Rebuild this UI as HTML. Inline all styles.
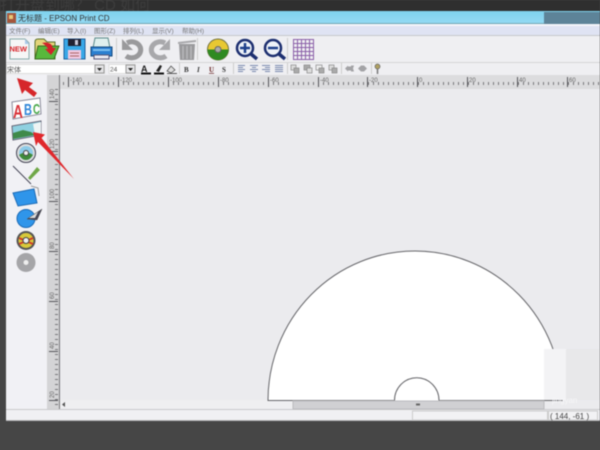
<!DOCTYPE html>
<html><head><meta charset="utf-8">
<style>
html,body{margin:0;padding:0;background:#464646;}
body{width:600px;height:450px;overflow:hidden;position:relative;font-family:"Liberation Sans","Noto Sans CJK SC",sans-serif;}
div{position:absolute;box-sizing:border-box;}
svg{position:absolute;left:0;top:0;}
#w{left:0;top:0;width:600px;height:450px;filter:blur(.45px);background:#464646;}
</style></head>
<body>
<div id="w">
<div style="left:0;top:0;width:600px;height:11px;background:#2f2f2f"></div>
<div style="left:0;top:0;width:340px;height:11px;color:#3d3d3d;font-size:15px;line-height:11px;white-space:nowrap;overflow:hidden;">打开盘到哪？ CD 如何</div>
<div style="left:6px;top:11px;width:594px;height:13px;background:linear-gradient(#7fd2ee,#93d9f3);border-bottom:1px solid #6fa6b5"></div>
<div style="left:544px;top:12px;width:56px;height:12px;background:#5d8398"></div>
<div style="left:6px;top:24px;width:594px;height:2px;background:#f4f5fa"></div>
<div style="left:6px;top:26px;width:594px;height:10px;background:#dfe3f3;border-bottom:1px solid #c6c7cc"></div>
<div style="left:6px;top:36px;width:594px;height:26px;background:#efeff2"></div>
<div style="left:6px;top:62px;width:594px;height:13px;background:#efeff2;border-top:1px solid #d6d6d6"></div>
<div style="left:6px;top:75px;width:41px;height:334px;background:#f1f1f5"></div>
<div style="left:47px;top:75px;width:553px;height:14px;background:#dcdcde"></div>
<div style="left:47px;top:75px;width:13px;height:334px;background:#d4d4d6;border-right:1px solid #77777a"></div>
<div style="left:60px;top:89px;width:540px;height:320px;background:#ebebee"></div>
<div style="left:60px;top:400px;width:484px;height:9px;background:#efeff1"></div>
<div style="left:6px;top:409px;width:594px;height:12px;background:#f0f0f3;border-top:1px solid #c9c9cc;border-bottom:1px solid #b5b5b8"></div>
<div style="left:60px;top:82px;width:540px;height:3px;background:repeating-linear-gradient(90deg,#77777a 0 1px,transparent 1px 5px);background-position:3px 0"></div>
<div style="left:55px;top:89px;width:3px;height:320px;background:repeating-linear-gradient(#77777a 0 1px,transparent 1px 5px)"></div>
<svg width="600" height="450" viewBox="0 0 600 450">
<!-- ruler majors -->
<g stroke="#55555a" stroke-width="1">
<path d="M68.500 77V87M118.500 77V87M168.500 77V87M218.500 77V87M268.500 77V87M318.500 77V87M367.500 77V87M417.500 77V87M467.500 77V87M517.500 77V87M567.500 77V87"/>
<path d="M49 101.500H58M49 151.500H58M49 201.500H58M49 251.500H58M49 301.500H58M49 351.500H58M49 400.500H58"/>
</g>
<g fill="#666" font-size="6" font-family="Liberation Sans">
<text x="70" y="82">-140</text><text x="120" y="82">-120</text><text x="170" y="82">-100</text><text x="220" y="82">-80</text><text x="270" y="82">-60</text><text x="320" y="82">-40</text><text x="369" y="82">-20</text><text x="419" y="82">0</text><text x="469" y="82">20</text><text x="519" y="82">40</text><text x="569" y="82">60</text>
<text transform="translate(54,99) rotate(-90)">140</text><text transform="translate(54,149) rotate(-90)">120</text><text transform="translate(54,199) rotate(-90)">100</text><text transform="translate(54,249) rotate(-90)">80</text><text transform="translate(54,299) rotate(-90)">60</text><text transform="translate(54,349) rotate(-90)">40</text><text transform="translate(54,398) rotate(-90)">20</text>
</g>
<!-- disc -->
<path d="M268 400.500A147 149.500 0 0 1 562 400.500Z" fill="#fff" stroke="#66666a" stroke-width="1"/>
<path d="M394.500 400.500A22 22.500 0 0 1 439 400.500" fill="#fff" stroke="#66666a" stroke-width="1"/>
<rect x="544" y="349" width="22" height="51" fill="#f3f3f5"/>
<rect x="566" y="349" width="34" height="51" fill="#e8e8ea"/>
<text x="552" y="403" font-size="8" fill="#f6f6f8">jingyan</text>
<rect x="293" y="401" width="251" height="8" fill="#d0d0d3" stroke="#bcbcbf" stroke-width="1"/>
<path d="M416 404.500h4" stroke="#666" stroke-width="2"/>
<path d="M62 404.500l3-2.500v5z" fill="#555"/>
<rect x="412.500" y="411" width="135" height="9" fill="#f2f2f4" stroke="#ccc"/>
<rect x="548.500" y="411" width="49" height="9" fill="#f2f2f4" stroke="#ccc"/>
<text x="550" y="419" font-size="8" fill="#444" font-family="Liberation Sans">( 144, -61 )</text>
<!-- title icon -->
<rect x="7" y="13" width="9" height="10" fill="#a5563c"/>
<rect x="9" y="15" width="4" height="4" fill="#e8c777"/>
<text x="18" y="21" font-size="8" fill="#333">无标题 - EPSON Print CD</text>
<!-- menu -->
<g font-size="6.500" fill="#777">
<text x="9" y="33">文件(F)</text><text x="38" y="33">编辑(E)</text><text x="67" y="33">导入(I)</text><text x="94" y="33">图形(Z)</text><text x="123" y="33">排列(L)</text><text x="152" y="33">显示(V)</text><text x="182" y="33">帮助(H)</text>
</g>
<!-- NEW -->
<path d="M10 39h15l4 4v16H10z" fill="#f6f6f6" stroke="#8aa" stroke-width="1"/>
<path d="M25 39v5h4z" fill="#a8c8ea"/>
<text x="9.500" y="51.500" font-size="7.500" font-weight="700" fill="#d8242a">NEW</text>
<!-- open -->
<path d="M35 59l0-17q0-3 3-3h6l3 3h8v17z" fill="#e4d47a" stroke="#59702b"/>
<path d="M35 59l3-13h21l-5 13z" fill="#58b83c" stroke="#3a6a20"/>
<path d="M42 43q9-2 11 5l3 0-5 7-6-6 3 0q-2-4-6-6z" fill="#d2222a"/>
<!-- save -->
<path d="M64 39h21v20H64z" fill="#38a8e8" stroke="#1d5f9d"/>
<rect x="68" y="39" width="13" height="7" fill="#223"/>
<rect x="75" y="40" width="3" height="5" fill="#ccd"/>
<rect x="68" y="50" width="13" height="9" fill="#f0c8e0"/>
<path d="M70 53h9M70 56h9" stroke="#a66"/>
<!-- print -->
<path d="M95 38h13l2 10H93z" fill="#dff0ee" stroke="#5a8a8a"/>
<path d="M91 47h21v9H91z" fill="#2a7fd0" stroke="#134a80"/>
<rect x="94" y="55" width="15" height="4" fill="#e8e8f0" stroke="#557"/>
<path d="M93 49h17v2H93z" fill="#7cc0f0"/>
<path d="M116.500 38v22" stroke="#ccc"/>
<!-- undo/redo -->
<path d="M127 43a9 8 0 1 1 -1 13" fill="none" stroke="#9a9a9c" stroke-width="5"/>
<path d="M122 39v11h11z" fill="#9a9a9c"/>
<path d="M165 43a9 8 0 1 0 1 13" fill="none" stroke="#a8a8ab" stroke-width="5"/>
<path d="M170 39v11h-11z" fill="#a8a8ab"/>
<!-- trash -->
<path d="M179 44h16l-1 16h-14z" fill="#9a9a9d"/>
<path d="M183 46v13M187 46v13M191 46v13" stroke="#c2c2c4"/>
<path d="M178 42l18-2v2l-18 2z" fill="#a8a8ab"/>
<path d="M197.500 38v22" stroke="#ccc"/>
<!-- CD green -->
<circle cx="218" cy="49.500" r="10.500" fill="#e8c832" stroke="#707040"/>
<path d="M207.500 49.500a10.500 10.500 0 0 0 21 0z" fill="#2f8a22"/>
<circle cx="218" cy="49.500" r="3" fill="#aaa" stroke="#666"/>
<!-- zoom -->
<g fill="#eef2f8" stroke="#1d2f70" stroke-width="2.500">
<circle cx="245" cy="48" r="8"/><circle cx="273" cy="48" r="8"/>
</g>
<path d="M251 54l6 5M279 54l6 5" stroke="#1d2f70" stroke-width="3.500"/>
<path d="M240 48h10M245 43v10M268 48h10" stroke="#1d3f8a" stroke-width="2.500"/>
<path d="M287.500 38v22" stroke="#ccc"/>
<!-- grid -->
<g stroke="#8a5fa8" stroke-width="1">
<path d="M293 39.500h21M293 43.500h21M293 47.500h21M293 51.500h21M293 55.500h21M293 59.500h21"/>
<path d="M293.500 39v21M297.500 39v21M301.500 39v21M305.500 39v21M309.500 39v21M313.500 39v21"/>
</g>
<!-- format row -->
<rect x="6.500" y="64.500" width="98" height="9" fill="#fff" stroke="#ddd"/>
<rect x="95" y="65" width="9" height="8" fill="#e4e4e6" stroke="#999"/>
<path d="M97 68h5l-2.500 3z" fill="#222"/>
<text x="7" y="72" font-size="7" fill="#555">宋体</text>
<rect x="109" y="64.500" width="26" height="9" fill="#fff" stroke="#ddd"/>
<rect x="126" y="65" width="9" height="8" fill="#e4e4e6" stroke="#999"/>
<path d="M128 68h5l-2.500 3z" fill="#222"/>
<text x="110" y="71.500" font-size="6.500" fill="#555">24</text>
<text x="141" y="72" font-size="9" font-weight="700" fill="#222">A</text>
<path d="M141 73.500h10" stroke="#111" stroke-width="2"/>
<path d="M154 73.500h10" stroke="#111" stroke-width="2"/>
<path d="M156 71l4-6 2 1-3 6z" fill="#222"/>
<path d="M167 71l4-5 4 4-4 3z" fill="#ddd" stroke="#444" stroke-width=".7"/>
<path d="M167 73.500h10" stroke="#555" stroke-width="1"/>
<path d="M179.500 63v11" stroke="#ccc"/>
<g font-size="7" font-weight="700" font-family="Liberation Serif" fill="#333">
<text x="184" y="72">B</text><text x="197" y="72" font-style="italic">I</text><text x="209" y="72" text-decoration="underline" fill="#622">U</text><text x="222" y="72">S</text>
</g>
<path d="M233.500 63v11" stroke="#ccc"/>
<g stroke="#7a8ab0" stroke-width="1">
<path d="M238 65.500h7M238 67.500h5M238 69.500h7M238 71.500h5"/>
<path d="M250 65.500h8M252 67.500h4M250 69.500h8M252 71.500h4"/>
<path d="M262 65.500h8M265 67.500h5M262 69.500h8M265 71.500h5"/>
<path d="M275 65.500h8M275 67.500h8M275 69.500h8M275 71.500h8"/>
</g>
<path d="M287.500 63v11" stroke="#ccc"/>
<g fill="#aaa" stroke="#888" stroke-width=".7">
<rect x="291" y="65" width="5" height="5" fill="#ddd"/><rect x="294" y="68" width="5" height="5"/>
<rect x="304" y="65" width="6" height="5"/><rect x="307" y="68" width="5" height="5" fill="#ddd"/>
<rect x="316" y="65" width="6" height="5" fill="#eee"/><rect x="319" y="68" width="5" height="5"/>
<rect x="329" y="65" width="5" height="5" fill="#ddd"/><rect x="332" y="68" width="5" height="5"/>
</g>
<path d="M341.500 63v11" stroke="#ccc"/>
<path d="M345 68.500l3-3v1h3v-1h3l-1 3 1 3h-3v-1h-3v1zM358 68.500l3-3h3l3 3-3 3h-3z" fill="#a3a3a6"/>
<path d="M371.500 63v11" stroke="#ccc"/>
<circle cx="377.500" cy="66.500" r="2.500" fill="#b0a060" stroke="#666" stroke-width=".7"/>
<path d="M377.500 69v5" stroke="#777" stroke-width="1.500"/>
<!-- left tools -->
<path d="M12 102l28-4 1 16-28 5z" fill="#fff" stroke="#8a8a9a"/>
<text x="13" y="118" font-size="18" font-weight="700" fill="#d9333a" textLength="10" lengthAdjust="spacingAndGlyphs">A</text>
<text x="24" y="115" font-size="16" font-weight="700" fill="#2f86d8" textLength="8" lengthAdjust="spacingAndGlyphs">B</text>
<text x="33" y="114" font-size="15" font-weight="700" fill="#49a84a" textLength="7" lengthAdjust="spacingAndGlyphs">C</text>
<path d="M12 126l29-5v14l-28 5z" fill="#8fd0e0" stroke="#667"/>
<path d="M13 133l10-3 8 2 4 3-22 4z" fill="#3f8a4a"/>
<path d="M33 124l8-2v12l-6 1z" fill="#eef4f4"/>
<circle cx="26" cy="153" r="9.500" fill="#ddd" stroke="#445"/>
<circle cx="26" cy="153" r="7" fill="#8ecbe8"/>
<path d="M19 155q7-5 14 0q-3 5-7 5t-7-5z" fill="#3f8a3a"/>
<circle cx="26" cy="153" r="2.500" fill="#eee" stroke="#444"/>
<path d="M13 166l18 18" stroke="#445" stroke-width="1"/>
<path d="M28 178l9-11 3 3-10 10z" fill="#70a848"/>
<path d="M29 180l-1.500-2.500 2.500 2.500z" fill="#eee"/>
<path d="M13 193l21-4 3 14-19 3z" fill="#2f95ea" stroke="#1c6ab5"/>
<path d="M31 186l7 2 1 8" fill="none" stroke="#999"/>
<circle cx="26" cy="218.500" r="9" fill="#2f95ea" stroke="#1c6ab5"/>
<path d="M27 219l15-10-5 11z" fill="#445" stroke="#555" stroke-width=".5"/>
<path d="M29 218l9-6-3 6z" fill="#ddd"/>
<circle cx="26" cy="240.500" r="9.500" fill="#555"/>
<circle cx="26" cy="240.500" r="7.500" fill="#d8c93a"/>
<path d="M19 238l14 6M19 244l14-6" stroke="#d03a2a" stroke-width="2"/>
<circle cx="26" cy="240.500" r="3" fill="#eee" stroke="#444"/>
<circle cx="26" cy="262.500" r="9.500" fill="#a5a5a8"/>
<circle cx="26" cy="262.500" r="2.500" fill="#eee"/>
<!-- red arrows -->
<path d="M17 78l16 5-4 4 8 6-3 4-9-7-3 4z" fill="#d6262a"/>
<path d="M33 132l12 2.500-3.500 3.500 32.500 41-36-37-2 4z" fill="#e0282c"/>
</svg>
</div>
</body></html>
